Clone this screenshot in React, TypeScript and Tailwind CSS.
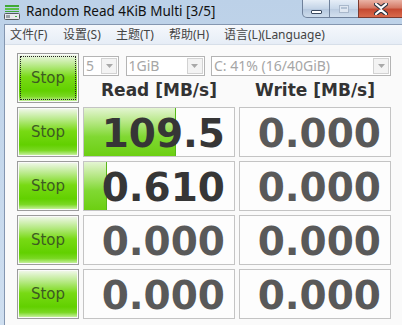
import React from "react";

const rows = [
  { read: "109.5", write: "0.000", bar: 92, active: true },
  { read: "0.610", write: "0.000", bar: 23, active: true },
  { read: "0.000", write: "0.000", bar: 0, active: false },
  { read: "0.000", write: "0.000", bar: 0, active: false },
];

const menus = ["文件(F)", "设置(S)", "主题(T)", "帮助(H)"];

function AppIcon() {
  return (
    <svg width="16" height="16" viewBox="0 0 16 16">
      <rect x="1" y="1" width="14" height="2" fill="#3fa836" />
      <rect x="1" y="4" width="14" height="2" fill="#5cc24a" />
      <rect x="1" y="7" width="14" height="1" fill="#3fa836" />
      <rect x="0.5" y="9.5" width="15" height="6" rx="1" fill="#e8eaec" stroke="#55595e" />
      <rect x="2" y="11" width="4" height="3" fill="#9aa0a6" />
      <rect x="11" y="12" width="2" height="1" fill="#48b548" />
    </svg>
  );
}

function StopButton({ focused }: { focused?: boolean }) {
  return (
    <div className="w-full h-full border border-[#9c9c9c] p-px">
      <div
        className={
          "w-full h-full flex items-center justify-center bg-[linear-gradient(to_bottom,#eef7e6_0%,#b9ea8a_22%,#78da14_48%,#62d000_78%,#7ad823_90%,#c4f09a_100%)] text-[#3d5b22] text-[15px] " +
          (focused ? "outline outline-1 outline-dotted outline-[#222] -outline-offset-2" : "")
        }
        style={{ fontFamily: '"DejaVu Sans", sans-serif' }}
      >
        Stop
      </div>
    </div>
  );
}

function Combo({ label, w }: { label: string; w: string }) {
  return (
    <div className={"h-[20px] border border-[#b4b4b4] bg-white flex items-stretch " + w}>
      <div className="flex-1 flex items-center pl-[2px] text-[14px] text-[#a6a6a6] leading-none overflow-hidden whitespace-nowrap">
        {label}
      </div>
      <div className="w-[16px] m-px border border-[#d2d2d2] bg-[#f3f3f3] flex items-center justify-center">
        <svg width="7" height="4" viewBox="0 0 7 4">
          <path d="M0 0h7L3.5 4z" fill="#a8a8a8" />
        </svg>
      </div>
    </div>
  );
}

function ValueCell({ value, bar, dark }: { value: string; bar: number; dark: boolean }) {
  return (
    <div className="relative w-full h-full border border-[#c4c4c4] bg-[#fdfdfd] overflow-hidden flex items-center justify-end pr-[9px]">
      {bar > 0 && (
        <div
          className="absolute left-0 top-0 bottom-0 border-r border-[#58b81a] bg-[linear-gradient(to_bottom,#e4f5d2_0%,#b4e782_30%,#80d832_60%,#6ccf12_100%)]"
          style={{ width: bar }}
        />
      )}
      <span
        className={"relative text-[39px] font-bold leading-none pt-[2px] " + (dark ? "text-[#363636]" : "text-[#595959]")}
        style={{ fontFamily: '"DejaVu Sans", Verdana, sans-serif' }}
      >
        {value}
      </span>
    </div>
  );
}

export default function App() {
  return (
    <div
      className="w-[402px] h-[325px] overflow-hidden flex flex-col bg-[linear-gradient(to_bottom,#bcd1e8,#cfdff0)]"
      style={{ fontFamily: '"Noto Sans", "Noto Sans CJK SC", sans-serif' }}
    >
      {/* TITLE BAR */}
      <div className="h-[24px] flex items-start shrink-0">
        <div className="flex items-center h-full pl-[4px]">
          <AppIcon />
          <span className="ml-[6px] text-[13.5px] text-[#111] leading-none">Random Read 4KiB Multi [3/5]</span>
        </div>
        <div className="ml-auto flex h-[18px]">
          <div className="w-[28px] h-full rounded-bl-[5px] border border-t-0 border-[#6f819b] bg-[linear-gradient(to_bottom,#e6eef7,#c4d4e7_50%,#b3c6dd_51%,#cddcec)] flex items-end justify-center pb-[3px]">
            <div className="w-[11px] h-[4px] bg-white border border-[#3b4a60] rounded-[1px]" />
          </div>
          <div className="w-[28px] h-full border-b border-[#6f819b] bg-[linear-gradient(to_bottom,#e6eef7,#c9d8ea_50%,#bacbe0_51%,#d3e0ee)] flex items-center justify-center">
            <div className="w-[10px] h-[8px] border border-[#a9b8cb] bg-[#dfe7f1] p-px">
              <div className="w-full h-[2px] bg-[#b3c2d4]" />
            </div>
          </div>
          <div className="w-[44px] h-full border-b border-l border-[#7a3a30] bg-[linear-gradient(to_bottom,#eab3a6,#d47a66_45%,#c54a32_55%,#d96a4c)] flex items-center justify-center">
            <svg width="14" height="12" viewBox="0 0 14 12">
              <path d="M2 1l5 4 5-4M2 11l5-4 5 4" stroke="#2e3440" strokeWidth="4.2" fill="none" strokeLinecap="round" />
              <path d="M2 1l5 4 5-4M2 11l5-4 5 4" stroke="#ffffff" strokeWidth="2.2" fill="none" strokeLinecap="round" />
            </svg>
          </div>
        </div>
      </div>

      {/* CLIENT */}
      <div className="flex-1 ml-[4px] border-l border-t border-[#8496b0] flex flex-col">
        {/* MENU */}
        <div className="h-[20px] shrink-0 flex items-center pl-[5px] bg-[linear-gradient(to_bottom,#f5f8fc,#e6edf6)] border-b border-[#d7dfe9] text-[12px] text-[#444] leading-none">
          {menus.map((m) => (
            <span key={m} className="w-[53px] whitespace-nowrap">
              {m}
            </span>
          ))}
          <span className="whitespace-nowrap ml-[2px]">语言(L)(Language)</span>
        </div>

        {/* CONTENT */}
        <div className="flex-1 bg-[#fafafa] pl-[12px] pt-[8px]">
          <div className="grid grid-cols-[62px_152px_152px] auto-rows-[50px] gap-x-[4px] gap-y-[4px]">
            <StopButton focused />
            <div className="col-span-2 flex flex-col">
              <div className="mt-[3px] flex justify-between">
                <Combo label="5" w="w-[36px]" />
                <Combo label="1GiB" w="w-[79px]" />
                <Combo label="C: 41% (16/40GiB)" w="w-[180px]" />
              </div>
              <div
                className="flex-1 grid grid-cols-[152px_152px] gap-x-[4px] items-center text-[17px] font-bold text-[#333] leading-none pt-[2px]"
                style={{ fontFamily: '"DejaVu Sans", Verdana, sans-serif' }}
              >
                <div className="text-center">Read [MB/s]</div>
                <div className="text-center">Write [MB/s]</div>
              </div>
            </div>

            {rows.map((r, i) => (
              <React.Fragment key={i}>
                <StopButton />
                <ValueCell value={r.read} bar={r.bar} dark={r.active} />
                <ValueCell value={r.write} bar={0} dark={false} />
              </React.Fragment>
            ))}
          </div>
        </div>
      </div>
    </div>
  );
}
